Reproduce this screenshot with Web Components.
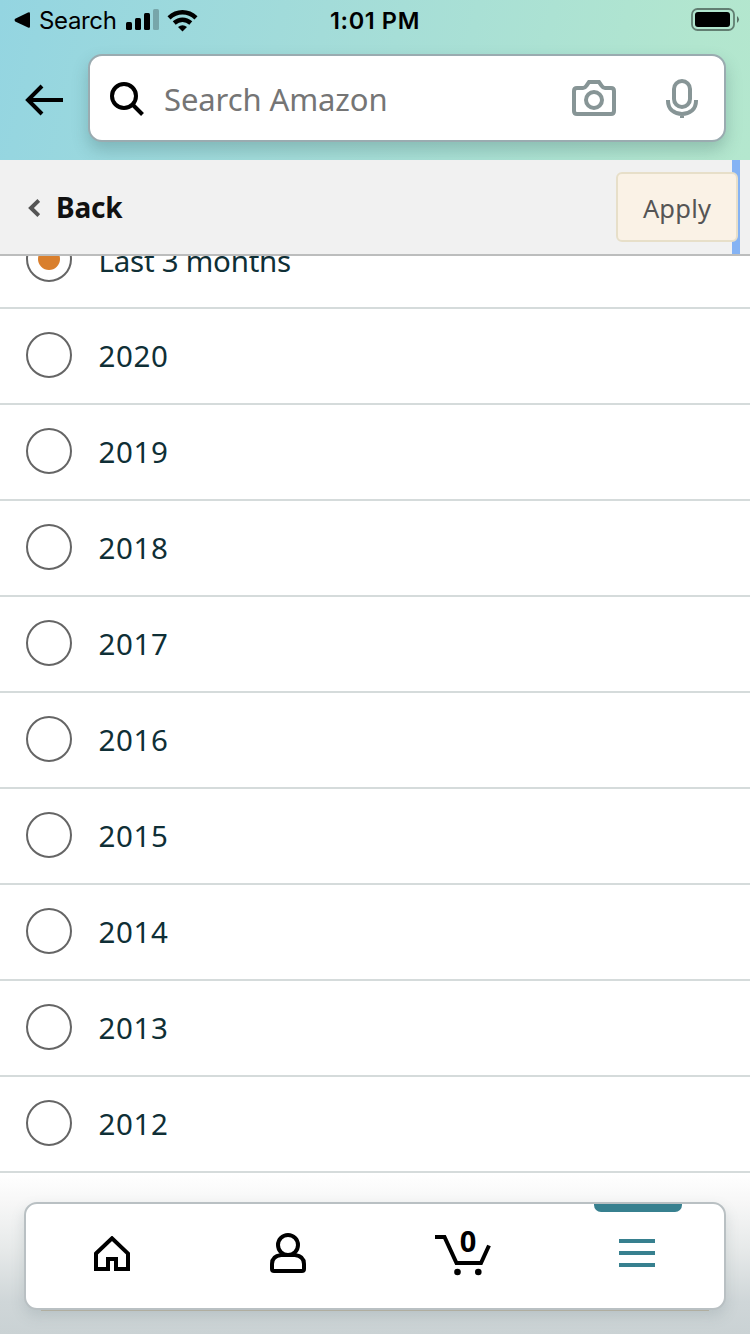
<!DOCTYPE html>
<html lang="en">
<head>
<meta charset="utf-8">
<title>Order filter</title>
<style>
html,body{margin:0;padding:0}
body{width:750px;height:1334px;overflow:hidden;background:#fff;font-family:"Noto Sans","Open Sans",sans-serif}
</style>
</head>
<body>
<filter-screen></filter-screen>
<script>
const define = (name, html) => {
  const tpl = document.createElement('template');
  tpl.innerHTML = html;
  customElements.define(name, class extends HTMLElement {
    constructor() {
      super();
      this.attachShadow({ mode: 'open' }).appendChild(tpl.content.cloneNode(true));
    }
  });
};

define('status-bar', `
<style>
:host{display:grid;grid-template:40px / 1fr auto 1fr;align-items:center;height:40px;font-family:Inter,sans-serif;font-size:24px;line-height:38px;color:#000}
.left{display:flex;align-items:center;padding-left:14px}
.search{margin:2px 0 0 9px;letter-spacing:-.35px;width:78px;white-space:nowrap}
.time{font-weight:600;font-size:23.5px;white-space:nowrap;letter-spacing:.6px;margin-top:2px}
.right{display:flex;justify-content:flex-end;padding-right:10px}
svg{display:block}
.signal{margin:-1px 0 0 9px}
.wifi{margin-left:8px}
</style>
<div class="left">
<svg width="16" height="16" viewBox="0 0 16 16"><path d="M1.200 6.800 14 .6q2-.8 2 1v13q0 1.800-2 1L1.200 9.400Q0 8 1.200 6.800Z"/></svg>
<span class="search">Search</span>
<svg class="signal" width="33" height="21" viewBox="0 0 33 21"><rect y="13" width="6" height="8" rx="1.500"/><rect x="9" y="9" width="6" height="12" rx="1.500"/><rect x="18" y="4" width="6" height="17" rx="1.500"/><rect x="27" width="6" height="21" rx="1.500" opacity=".23"/></svg>
<svg class="wifi" width="31" height="23" viewBox="0 0 31 23"><g fill="none" stroke="#000" stroke-width="4.400"><path d="M2 8.900Q8 3.200 15.500 3.200T29 8.900"/><path d="M7.200 14Q11 10.700 15.500 10.700T23.800 14"/></g><path d="M11 18q4.500-3.600 9 0l-4.500 4.600Z"/></svg>
</div>
<div class="time">1:01 PM</div>
<div class="right"><svg width="49" height="24" viewBox="0 0 49 24"><rect x="1" y="1" width="42" height="21" rx="5.500" fill="none" stroke="#000" stroke-opacity=".45" stroke-width="1.800"/><rect x="4" y="4" width="35" height="15" rx="3"/><path d="M46 8q4 3.500 0 7Z" opacity=".5"/></svg></div>
`);

define('search-field', `
<style>
:host{display:flex;align-items:center;box-sizing:border-box;width:638px;height:88px;border:2px solid #9aabb0;border-radius:14px;background:#fff;box-shadow:0 8px 16px rgba(50,90,90,.27);padding:2px 0 0 19px}
.ph{margin:-1px 0 0 19px;flex:1;color:#757575;font-size:31px;line-height:44px;white-space:nowrap;letter-spacing:-.1px}
svg{display:block;fill:none;stroke:#879596;stroke-width:4}
.mag{stroke:#000}
.cam{margin:-2px 50px 0 0}
.mic{margin-right:26px}
</style>
<svg class="mag" width="36" height="36" viewBox="0 0 36 36"><circle cx="15" cy="15" r="12"/><path d="m23.500 23.500 10 10"/></svg>
<span class="ph">Search Amazon</span>
<svg class="cam" width="44" height="36" viewBox="0 0 44 36"><path d="M5 8h6q2 0 3.200-2L17 2h10l2.800 4Q31 8 33 8h6q3 0 3 3v20q0 3-3 3H5q-3 0-3-3V11q0-3 3-3Z"/><circle cx="22" cy="20" r="8"/></svg>
<svg class="mic" width="32" height="40" viewBox="0 0 32 40"><rect x="8" y="2" width="16" height="26" rx="8"/><path d="M2 21v1q0 6 4 9.500 4.300 3.500 10 3.500t10-3.500q4-3.500 4-9.500v-1M16 35v4"/></svg>
`);

define('top-header', `
<style>
:host{display:block;height:160px;overflow:hidden;background:linear-gradient(102deg,#94d5e1 0%,#a3dcd9 42%,#b2e6cf 90%,#b4e7ce 100%)}
.row{display:flex;align-items:center;padding:14px 0 0 25px;gap:25px}
.arrow{margin-top:4px}
</style>
<status-bar></status-bar>
<div class="row">
<svg class="arrow" width="38" height="32" viewBox="0 0 38 32" fill="none" stroke="#000" stroke-width="4"><path d="M38 16H3.500M17 2 3 16l14 14"/></svg>
<search-field></search-field>
</div>
`);

define('back-bar', `
<style>
:host{display:flex;box-sizing:border-box;height:96px;background:#f1f1f1;border-bottom:2px solid #bcbdbd;align-items:center;padding-left:28px;position:relative;z-index:1}
.chev{margin-top:2px}
b{margin-left:16px;font-size:28px;line-height:40px;color:#111;flex:1;letter-spacing:-.2px}
.end{display:flex;align-items:center;height:100%;width:134px;background:linear-gradient(90deg,transparent 116px,#85b3f4 116px 124px,transparent 124px)}
.btn{box-sizing:border-box;width:122px;height:70px;border:2px solid #e7dfc9;border-radius:6px;background:#faf2e6;color:#555;font-size:25.500px;letter-spacing:.2px;line-height:69px;text-align:center}
</style>
<svg class="chev" width="12" height="18" viewBox="0 0 12 18" fill="none" stroke="#555" stroke-width="4"><path d="M10.800 1.500 3 9l7.800 7.500"/></svg>
<b>Back</b>
<div class="end"><div class="btn">Apply</div></div>
`);

define('radio-row', `
<style>
:host{display:flex;align-items:center;box-sizing:border-box;height:96px;border-bottom:2px solid #d5dbdb;padding-left:26px;color:#0f2f36;font-size:29.500px;line-height:40px;gap:26.500px}
.dot{box-sizing:border-box;width:46px;height:46px;border:2px solid #656565;border-radius:50%;margin-top:-2px;display:grid;place-items:center}
:host([checked]) .dot::after{content:"";width:22px;height:22px;border-radius:50%;background:#d97f2d}
.label{letter-spacing:.6px;margin-top:-1px;white-space:nowrap}
:host([checked]) .label{letter-spacing:-.25px;margin-top:1px}
</style>
<span class="dot"></span><span class="label"><slot></slot></span>
`);

define('option-list', `
<style>
:host{display:block;height:917px;overflow:hidden}
.in{margin-top:-43px}
</style>
<div class="in"><slot></slot></div>
`);

define('nav-bar', `
<style>
:host{display:block;height:161px;box-sizing:border-box;padding:29px 24px 0;overflow:hidden;background:linear-gradient(180deg,#fff 0,#f7f7f7 18%,#e6e9e9 48%,#cfd6d8 80%,#cad2d4 100%)}
.card{box-sizing:border-box;height:108px;border:2px solid #b9c0c3;border-radius:13px;background:#fff;display:grid;grid-template-columns:repeat(4,1fr);align-items:start;justify-items:center;box-shadow:0 6px 14px rgba(100,120,125,.2)}
.tab{width:100%;height:104px;display:grid;justify-items:center;align-content:start;position:relative}
svg{display:block;fill:none;stroke:#000;stroke-width:4}
.count{position:absolute;left:83px;top:20px;font-size:29px;line-height:34px;font-weight:700;width:20px;text-align:center}
.mark{position:absolute;top:0;left:44px;width:88px;height:8px;background:#37808f;border-radius:0 0 7px 7px}
.line{height:1px;background:#b0aea0;margin:0 17px}
</style>
<div class="card">
<div class="tab"><svg style="margin:32px 0 0 -2px" width="36" height="35" viewBox="0 0 36 35"><path d="M2 17.500 18 2.300l16 15.200V33H22V23H14V33H2Z"/></svg></div>
<div class="tab"><svg style="margin-top:29px" width="36" height="40" viewBox="0 0 36 40"><circle cx="18" cy="12" r="10"/><path d="M11 22h14q9 1 9 9v5q0 2-2 2H4q-2 0-2-2v-5q0-8 9-9Z"/></svg></div>
<div class="tab"><svg style="margin:30px 0 0 1px" width="56" height="42" viewBox="0 0 56 42"><path d="M0 3h9.500l12 26H46l8-17.500"/><g fill="#000" stroke="none"><circle cx="22.500" cy="38" r="3.300"/><circle cx="43.300" cy="38" r="3.300"/></g></svg><span class="count">0</span></div>
<div class="tab"><span class="mark"></span><svg style="margin:35px 0 0 0;stroke:#37808f" width="36" height="28" viewBox="0 0 36 28"><path d="M0 2h36M0 14h36M0 26h36"/></svg></div>
</div>
<div class="line"></div>
`);

define('filter-screen', `
<style>:host{display:block;width:750px;height:1334px;overflow:hidden}</style>
<top-header></top-header>
<back-bar></back-bar>
<option-list>
<radio-row checked>Last 3 months</radio-row>
<radio-row>2020</radio-row><radio-row>2019</radio-row><radio-row>2018</radio-row>
<radio-row>2017</radio-row><radio-row>2016</radio-row><radio-row>2015</radio-row>
<radio-row>2014</radio-row><radio-row>2013</radio-row><radio-row>2012</radio-row>
</option-list>
<nav-bar></nav-bar>
`);
</script>
</body>
</html>
